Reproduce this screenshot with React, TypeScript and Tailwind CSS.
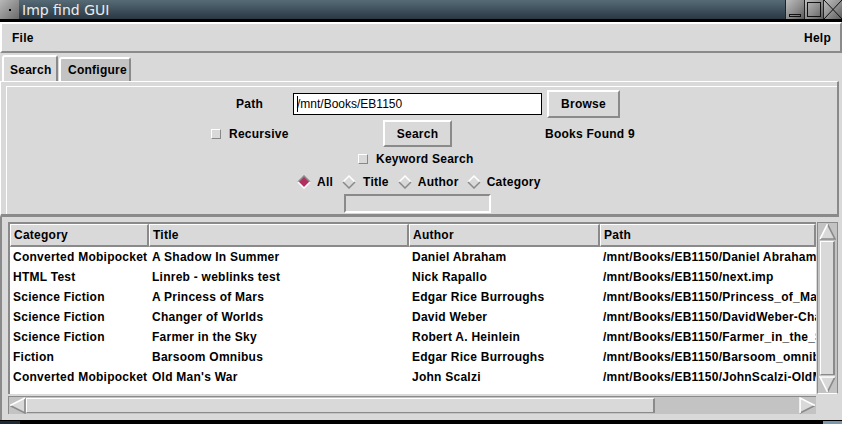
import React from "react";

const rows: string[][] = [
  ["Converted Mobipocket", "A Shadow In Summer", "Daniel Abraham", "/mnt/Books/EB1150/Daniel Abraham - A Shadow In Summer.imp"],
  ["HTML Test", "Linreb - weblinks test", "Nick Rapallo", "/mnt/Books/EB1150/next.imp"],
  ["Science Fiction", "A Princess of Mars", "Edgar Rice Burroughs", "/mnt/Books/EB1150/Princess_of_Mars.imp"],
  ["Science Fiction", "Changer of Worlds", "David Weber", "/mnt/Books/EB1150/DavidWeber-ChangerOfWorlds.imp"],
  ["Science Fiction", "Farmer in the Sky", "Robert A. Heinlein", "/mnt/Books/EB1150/Farmer_in_the_Sky.imp"],
  ["Fiction", "Barsoom Omnibus", "Edgar Rice Burroughs", "/mnt/Books/EB1150/Barsoom_omnibus.imp"],
  ["Converted Mobipocket", "Old Man's War", "John Scalzi", "/mnt/Books/EB1150/JohnScalzi-OldMansWar.imp"],
];

const colWidths = ["w-[139px]", "w-[260px]", "w-[191px]", "flex-1"];
const headers = ["Category", "Title", "Author", "Path"];

function TitleButton({ children }: { children?: React.ReactNode }) {
  return (
    <div className="w-[19px] h-[19px] border-l border-[#222] bg-[linear-gradient(135deg,#bdbdbd,#8c8c8c_55%,#5c5c5c)] flex items-center justify-center">
      {children}
    </div>
  );
}

function Diamond({ on }: { on?: boolean }) {
  return (
    <svg width="14" height="14" viewBox="0 0 14 14" className="shrink-0">
      <polygon points="7,1 13,7 7,13 1,7" fill={on ? "#b03060" : "#d9d9d9"} />
      <polyline points="1,7 7,1 13,7" fill="none" stroke={on ? "#8a8a8a" : "#ffffff"} strokeWidth="1.5" />
      <polyline points="1,7 7,13 13,7" fill="none" stroke={on ? "#ffffff" : "#8a8a8a"} strokeWidth="1.5" />
    </svg>
  );
}

function Check() {
  return <div className="w-[10px] h-[10px] shrink-0 bg-[#d9d9d9] border border-t-white border-l-white border-r-[#888] border-b-[#888]" />;
}

function Button({ label, w }: { label: string; w: string }) {
  return (
    <div className={`${w} h-full flex items-center justify-center bg-[#d9d9d9] border-2 border-t-white border-l-white border-r-[#8a8a8a] border-b-[#8a8a8a]`}>
      {label}
    </div>
  );
}

function Arrow({ dir }: { dir: "up" | "down" | "left" | "right" }) {
  const shapes = {
    up: { pts: "8,1 15,15 1,15", light: "1,15 8,1", dark: "8,1 15,15 1,15" },
    down: { pts: "1,1 15,1 8,15", light: "8,15 1,1 15,1", dark: "15,1 8,15" },
    left: { pts: "1,8 15,1 15,15", light: "15,1 1,8", dark: "1,8 15,15 15,1" },
    right: { pts: "1,1 15,8 1,15", light: "1,15 1,1 15,8", dark: "15,8 1,15" },
  }[dir];
  return (
    <svg width="17" height="17" viewBox="0 0 16 16" className="shrink-0">
      <polygon points={shapes.pts} fill="#d9d9d9" />
      <polyline points={shapes.dark} fill="none" stroke="#8a8a8a" strokeWidth="1.5" />
      <polyline points={shapes.light} fill="none" stroke="#ffffff" strokeWidth="1.5" />
    </svg>
  );
}

export default function App() {
  return (
    <div className="w-[842px] h-[424px] bg-black overflow-hidden flex flex-col font-['Liberation_Sans',Arial,sans-serif] text-[12px] tracking-[0.25px] font-bold text-black">
      {/* title bar */}
      <div className="h-[19px] flex items-center bg-[linear-gradient(to_bottom,#566b77,#2a3843)]">
        <div className="w-[19px] h-[19px] bg-[linear-gradient(135deg,#b8b8b8,#6a6a6a)] flex items-center justify-center">
          <div className="w-[2px] h-[2px] bg-black" />
        </div>
        <div className="ml-[3px] font-['DejaVu_Sans',sans-serif] font-normal tracking-normal text-[14px] text-[#ececec] leading-none">Imp find GUI</div>
        <div className="flex-1" />
        <TitleButton>
          <svg width="18" height="19" viewBox="0 0 18 19">
            <rect x="3.5" y="14.5" width="11" height="2" fill="none" stroke="#111" />
          </svg>
        </TitleButton>
        <TitleButton>
          <svg width="18" height="19" viewBox="0 0 18 19">
            <rect x="2.5" y="2.5" width="13" height="14" fill="none" stroke="#111" />
          </svg>
        </TitleButton>
        <TitleButton>
          <svg width="18" height="19" viewBox="0 0 18 19">
            <line x1="0" y1="0" x2="18" y2="19" stroke="#111" />
            <line x1="18" y1="0" x2="0" y2="19" stroke="#111" />
          </svg>
        </TitleButton>
      </div>
      <div className="h-[3px]" />

      {/* window body */}
      <div className="h-[398px] bg-[#d9d9d9] flex flex-col">
        {/* menu bar */}
        <div className="h-[31px] flex items-center justify-between px-[10px] border-2 border-t-white border-l-white border-r-[#8a8a8a] border-b-[#8a8a8a]">
          <span>File</span>
          <span className="mr-[-1px]">Help</span>
        </div>

        {/* tabs */}
        <div className="h-[28px] flex items-end pl-[2px]">
          <div className="h-[26px] w-[56px] flex items-center pl-[6px] pt-[1px] rounded-t-[3px] border-t-2 border-l-2 border-r-2 border-t-white border-l-white border-r-[#8a8a8a] bg-[#d9d9d9]">
            Search
          </div>
          <div className="h-[24px] w-[72px] ml-[1px] flex items-center pl-[7px] rounded-t-[3px] border-t-2 border-l-2 border-r-2 border-t-white border-l-white border-r-[#8a8a8a] bg-[#c3c3c3]">
            Configure
          </div>
        </div>

        {/* notebook frame */}
        <div className="border-t border-l border-t-white border-l-white border-r-2 border-r-[#8a8a8a] border-b-[3px] border-b-[#8a8a8a] pt-[4px] pl-[5px] mr-[3px]">
          <div className="border-t border-l border-white flex flex-col pt-[3px] pb-[1px]">
            <div className="h-[28px] flex items-center">
              <div className="ml-[229px] w-[57px]">Path</div>
              <div className="w-[249px] h-[22px] bg-white border border-black flex items-center pl-[3px] font-normal tracking-normal relative">
                <span>/mnt/Books/EB1150</span>
                <div className="absolute left-[3px] top-[2px] w-[1px] h-[16px] bg-black" />
              </div>
              <div className="ml-[5px] h-full">
                <Button label="Browse" w="w-[73px]" />
              </div>
            </div>
            <div className="h-[27px] mt-[2px] flex items-center">
              <div className="ml-[204px] w-[172px] flex items-center">
                <Check />
                <span className="ml-[8px]">Recursive</span>
              </div>
              <div className="h-full">
                <Button label="Search" w="w-[69px]" />
              </div>
              <div className="ml-[93px]">Books Found 9</div>
            </div>
            <div className="h-[24px] flex items-center">
              <div className="ml-[351px] flex items-center">
                <Check />
                <span className="ml-[8px]">Keyword Search</span>
              </div>
            </div>
            <div className="h-[22px] flex items-center">
              <div className="ml-[290px] flex items-center">
                <Diamond on />
                <span className="ml-[6px]">All</span>
                <span className="ml-[9px]"><Diamond /></span>
                <span className="ml-[7px]">Title</span>
                <span className="ml-[9px]"><Diamond /></span>
                <span className="ml-[6px]">Author</span>
                <span className="ml-[8px]"><Diamond /></span>
                <span className="ml-[6px]">Category</span>
              </div>
            </div>
            <div className="h-[19px] mt-[1px] flex">
              <div className="ml-[337px] w-[147px] h-full border-2 border-t-[#8a8a8a] border-l-[#8a8a8a] border-r-white border-b-white" />
            </div>
          </div>
        </div>

        {/* results */}
        <div className="flex-1 flex flex-col pl-[6px] pt-[5px] border-l-2 border-l-[#8a8a8a]">
          <div className="h-[172px] flex">
            <div className="w-[808px] h-full bg-white border-t-2 border-l-2 border-t-[#8a8a8a] border-l-[#8a8a8a] overflow-hidden flex flex-col">
              <div className="h-[23px] flex bg-[#d9d9d9] shrink-0">
                {headers.map((h, i) => (
                  <div
                    key={h}
                    className={`${colWidths[i]} h-full flex items-center pl-[3px] border border-t-white border-l-white border-r-2 border-r-[#8a8a8a] border-b-2 border-b-[#8a8a8a]`}
                  >
                    {h}
                  </div>
                ))}
              </div>
              {rows.map((r, ri) => (
                <div key={ri} className="h-[20px] flex items-center shrink-0">
                  {r.map((c, ci) => (
                    <div key={ci} className={`${colWidths[ci]} pl-[3px] whitespace-nowrap overflow-hidden`}>
                      {c}
                    </div>
                  ))}
                </div>
              ))}
            </div>
            {/* vertical scrollbar */}
            <div className="w-[21px] h-full ml-[1px] bg-[#c3c3c3] border border-l-[#8a8a8a] border-t-[#8a8a8a] border-r-[#8a8a8a] border-b-white flex flex-col items-center">
              <Arrow dir="up" />
              <div className="w-[15px] flex-1 my-[1px] bg-[#d9d9d9] border border-t-white border-l-white border-r-2 border-r-[#8a8a8a] border-b-[#8a8a8a]" />
              <Arrow dir="down" />
            </div>
          </div>
          {/* horizontal scrollbar */}
          <div className="w-[808px] h-[18px] mt-[2px] bg-[#c3c3c3] border-t border-l border-[#8a8a8a] flex items-center">
            <Arrow dir="left" />
            <div className="w-[629px] h-[15px] bg-[#d9d9d9] border border-t-white border-l-white border-r-2 border-r-[#8a8a8a] border-b-[#8a8a8a]" />
            <div className="flex-1" />
            <Arrow dir="right" />
          </div>
        </div>
      </div>

      {/* desktop strip */}
      <div className="flex-1 flex justify-between items-end">
        <div className="w-[20px] h-[3px] bg-[#1d2a35]" />
        <div className="w-[19px] h-[3px] bg-[#7d97a8]" />
      </div>
    </div>
  );
}
